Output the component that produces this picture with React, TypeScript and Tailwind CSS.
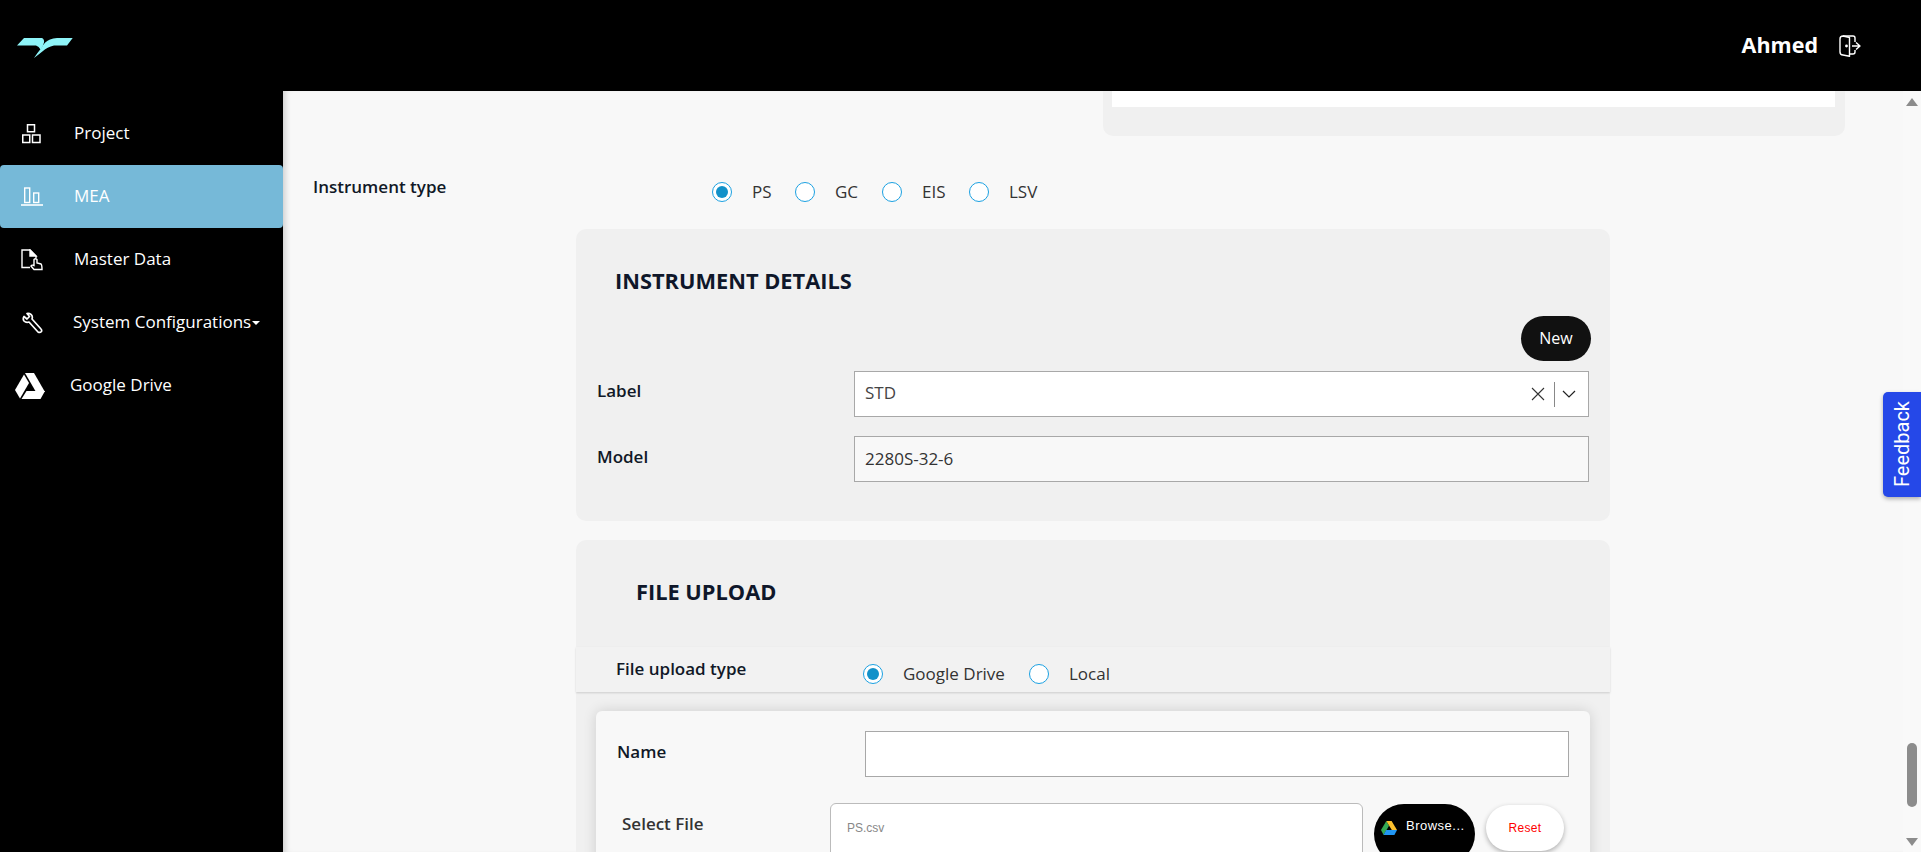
const sans = "font-['Open_Sans','Noto_Sans',sans-serif]";

function Logo() {
  return (
    <svg width="60" height="26" viewBox="0 0 60 26" fill="#8ef4f8">
      <path d="M0 11.5 L7 4 H25 Q27.5 5 27 8.5 Q26 13 23.5 15.5 Q22 12.5 19 11.5 Z" />
      <path d="M55.7 4 L50 11.5 H37 Q30 13 26 17 Q21 21 17 24 Q21 18 24 14.5 Q28 7 33 5.5 Q36 4 40 4 Z" />
    </svg>
  );
}

function NavIcon({ name }: { name: string }) {
  if (name === "project")
    return (
      <svg width="22" height="22" viewBox="0 0 22 22" fill="none" stroke="#fff" strokeWidth="1.5">
        <rect x="6.5" y="1.75" width="7" height="7" />
        <rect x="1.75" y="12" width="7" height="7.5" />
        <rect x="11.5" y="12" width="7.5" height="7.5" />
      </svg>
    );
  if (name === "mea")
    return (
      <svg width="22" height="22" viewBox="0 0 22 22" fill="none" stroke="#fff" strokeWidth="1.4">
        <rect x="3.7" y="2" width="5" height="14.5" />
        <rect x="12.7" y="7" width="5" height="9.5" />
        <path d="M0 19 H22" strokeWidth="1.6" />
      </svg>
    );
  if (name === "master")
    return (
      <svg width="22" height="22" viewBox="0 0 22 22" fill="none" stroke="#fff" strokeWidth="1.4">
        <path d="M9 18.5 H1 V1 H9 L15 7 V9" />
        <path d="M9 1 V7 H15 Z" fill="#fff" />
        <path d="M13 20.5 L10 17 Q10.5 15.5 13 16.5 V10.5 Q14.5 9 16 10.5 V14 L20 15 Q21 16 21 20.5 Z" fill="#000" />
      </svg>
    );
  if (name === "wrench")
    return (
      <svg width="22" height="22" viewBox="0 0 22 22" fill="none" stroke="#fff" strokeWidth="1.7" strokeLinejoin="round">
        <path d="M6 1.5 L8.5 4.5 L6 7 L3 4.5 Q1.5 7 3 9 Q5 11 8 10 L17 20 Q19 21 20.5 19.5 Q21 18 20 17 L11 7 Q12 4 10 2.5 Q8 1 6 1.5 Z" />
      </svg>
    );
  return (
    <svg width="30" height="26" viewBox="0 0 30 26" fill="#fff">
      <path d="M10 0 H19 L30 19 H21 Z" />
      <path d="M9 1.5 L14 10 L5 25.5 L0 17 Z" />
      <path d="M6.5 26 L11.5 18 H30 L25.5 26 Z" />
    </svg>
  );
}

function DriveColor() {
  return (
    <svg width="16" height="14" viewBox="0 0 16 14" className="mt-[3px] shrink-0">
      <path d="M5.3 0 L0 9 L2.6 14 L8 4.7 Z" fill="#34a853" />
      <path d="M5.3 0 H10.6 L16 9 H10.8 Z" fill="#fbc02d" />
      <path d="M5.2 9 H16 L13.4 14 H2.6 Z" fill="#2196f3" />
    </svg>
  );
}

function Radio({ label, checked, textClass }: { label: string; checked?: boolean; textClass?: string }) {
  return (
    <div className="flex items-center">
      <span className="flex h-5 w-5 shrink-0 items-center justify-center rounded-full border border-[#1ba1e2] bg-white">
        {checked && <span className="h-3 w-3 rounded-full bg-[#1291c9]" />}
      </span>
      <span className={`text-[17px] text-[#333] ${textClass ?? ""}`}>{label}</span>
    </div>
  );
}

function NavItem({ icon, label, active, caret, drive }: { icon: string; label: string; active?: boolean; caret?: boolean; drive?: boolean }) {
  return (
    <div
      className={`flex h-[63px] items-center rounded-[4px] text-[17px] text-white ${active ? "bg-[#76b9d8]" : ""} ${drive ? "pl-[15px]" : "pl-[21px]"}`}
    >
      <span className={`flex shrink-0 items-center ${drive ? "w-[55px]" : caret ? "w-[52px]" : "w-[53px]"}`}>
        <NavIcon name={icon} />
      </span>
      <span className="pb-[2px]">{label}</span>
      {caret && <span className="ml-[1px] mt-[1px] h-0 w-0 border-x-[4px] border-t-[4px] border-x-transparent border-t-white" />}
    </div>
  );
}

export default function App() {
  return (
    <div className={`flex h-[852px] w-full flex-col overflow-hidden bg-[#f8f8f8] ${sans}`}>
      <header className="flex h-[91px] shrink-0 items-center justify-between bg-black pl-[17px] pr-[60px]">
        <div className="mt-[3px]">
          <Logo />
        </div>
        <div className="flex items-center gap-[21px]">
          <span className="text-[21.5px] font-bold text-white">Ahmed</span>
          <svg width="22" height="22" viewBox="0 0 22 22" fill="none" stroke="#fff" strokeWidth="1.4" strokeLinejoin="round">
            <path d="M10.5 2.5 L4 1 Q1 1 1 4 V17 Q1 20 4 20 L10.5 21.3 Z" />
            <path d="M4 1 H14 Q16 1 16 3 V7" />
            <path d="M10.5 19 H14 Q16 19 16 17 V15" />
            <path d="M13 11 H20 M17 7.5 L21 11 L17 14.5" />
            <circle cx="7.5" cy="11" r="0.7" fill="#fff" />
          </svg>
        </div>
      </header>

      <div className="relative flex min-h-0 flex-1">
        <aside className="w-[283px] shrink-0 bg-black pt-[11px]">
          <NavItem icon="project" label="Project" />
          <NavItem icon="mea" label="MEA" active />
          <NavItem icon="master" label="Master Data" />
          <NavItem icon="wrench" label="System Configurations" caret />
          <NavItem icon="drive" label="Google Drive" drive />
        </aside>

        <main className="min-w-0 flex-1 overflow-hidden shadow-[inset_6px_0_6px_-4px_rgba(0,0,0,0.18)]">
          <div className="ml-[820px] mr-[58px] h-[45px] rounded-b-[10px] bg-[#f0f0f0] pl-[9px] pr-[10px]">
            <div className="h-[16px] bg-white" />
          </div>

          <div className="mt-[32px] flex h-[61px] items-start pl-[30px]">
            <span className="mt-[6px] w-[399px] text-[17px] font-semibold text-[#111827]">Instrument type</span>
            <div className="mt-[11px] flex">
              <Radio label="PS" checked textClass="ml-[20px] w-[43px]" />
              <Radio label="GC" textClass="ml-[20px] w-[47px]" />
              <Radio label="EIS" textClass="ml-[20px] w-[47px]" />
              <Radio label="LSV" textClass="ml-[20px]" />
            </div>
          </div>

          <section className="ml-[293px] mr-[293px] h-[292px] rounded-[10px] bg-[#f0f0f0] pl-[21px] pr-[21px]">
            <h2 className="pl-[18px] pt-[37px] text-[21.8px] font-bold leading-[30px] text-[#0f172a]">INSTRUMENT DETAILS</h2>
            <div className="mt-[20px] flex justify-end">
              <button className="mr-[-2px] h-[45px] w-[70px] rounded-full bg-[#111] pb-[1px] text-base text-white">New</button>
            </div>
            <div className="mt-[10px] flex h-[46px] items-center">
              <span className="mb-[6px] w-[257px] shrink-0 text-[17px] font-semibold text-[#111827]">Label</span>
              <div className="flex h-[46px] flex-1 items-center border border-[#a8a8a8] bg-white pl-[10px] pr-[12px] text-[17px] text-[#444]">
                <span className="flex-1 pb-[2px]">STD</span>
                <svg width="14" height="14" viewBox="0 0 14 14" stroke="#333" strokeWidth="1.1" className="mr-[9px]">
                  <path d="M1 1 L13 13 M13 1 L1 13" />
                </svg>
                <span className="mr-[7px] h-[25px] w-px bg-[#888]" />
                <svg width="14" height="8" viewBox="0 0 14 8" fill="none" stroke="#222" strokeWidth="1.2">
                  <path d="M1 1 L7 7 L13 1" />
                </svg>
              </div>
            </div>
            <div className="mt-[19px] flex h-[46px] items-center">
              <span className="mb-[4px] w-[257px] shrink-0 text-[17px] font-semibold text-[#111827]">Model</span>
              <div className="flex h-[46px] flex-1 items-center border border-[#a8a8a8] bg-[#f8f8f8] pb-[1px] pl-[10px] text-[17px] text-[#333]">2280S-32-6</div>
            </div>
          </section>

          <section className="ml-[293px] mr-[293px] mt-[19px] h-[400px] rounded-[10px] bg-[#f0f0f0]">
            <h2 className="pl-[60px] pt-[37px] text-[21.8px] font-bold leading-[30px] text-[#0f172a]">FILE UPLOAD</h2>
            <div className="mt-[40px] flex h-[45px] items-start bg-[#f2f2f2] pl-[40px] shadow-[0_1px_2px_rgba(0,0,0,0.15)]">
              <span className="mt-[9px] w-[247px] text-[17px] font-semibold text-[#111827]">File upload type</span>
              <div className="mt-[14px] flex">
                <Radio label="Google Drive" checked textClass="ml-[20px] w-[126px]" />
                <Radio label="Local" textClass="ml-[20px]" />
              </div>
            </div>
            <div className="ml-[20px] mr-[20px] mt-[19px] h-[220px] rounded-[6px] bg-[#f8f8f8] shadow-[0_0_14px_rgba(0,0,0,0.14)]">
              <div className="flex pt-[20px]">
                <span className="ml-[21px] mt-[8px] w-[248px] text-[17px] font-semibold text-[#111827]">Name</span>
                <div className="h-[46px] w-[704px] border border-[#a8a8a8] bg-white" />
              </div>
              <div className="mt-[26px] flex items-start">
                <span className="ml-[26px] mt-[8px] w-[208px] text-[17px] font-semibold text-[#333]">Select File</span>
                <div className="flex h-[60px] w-[533px] items-start rounded-[6px] border border-[#bbb] bg-white pl-[16px] pt-[16px] font-['Liberation_Sans',sans-serif] text-xs text-[#888]">PS.csv</div>
                <button className="ml-[11px] mt-[1px] flex h-[60px] w-[101px] items-start rounded-full bg-black pl-[7px] pt-[14px] font-['Liberation_Sans',sans-serif] text-[13px] tracking-[0.5px] text-white">
                  <DriveColor />
                  <span className="ml-[9px] leading-[16px]">Browse...</span>
                </button>
                <button className="ml-[11px] mt-[2px] h-[46px] w-[78px] rounded-full bg-white font-['Liberation_Sans',sans-serif] text-xs tracking-[0.3px] text-[#ff0000] shadow-[0_2px_5px_rgba(0,0,0,0.3)]">Reset</button>
              </div>
            </div>
          </section>
        </main>

        <div className="relative flex w-[18px] shrink-0 flex-col items-center bg-[#f9f9f9]">
          <span className="mt-[7px] h-0 w-0 border-x-[6px] border-b-[8px] border-x-transparent border-b-[#8c8c8c]" />
          <span className="mt-[637px] h-[64px] w-[10px] rounded-full bg-[#8c8c8c]" />
          <span className="mt-[31px] h-0 w-0 border-x-[6px] border-t-[8px] border-x-transparent border-t-[#8c8c8c]" />
        </div>

        <div className="absolute right-0 top-[301px] flex h-[105px] w-[38px] items-center justify-center rounded-l-[5px] bg-[#2548e8] shadow-[0_2px_4px_rgba(0,0,0,0.3)]">
          <span className="rotate-180 font-['Roboto',sans-serif] text-[20px] text-white [writing-mode:vertical-rl]">Feedback</span>
        </div>
      </div>
    </div>
  );
}
